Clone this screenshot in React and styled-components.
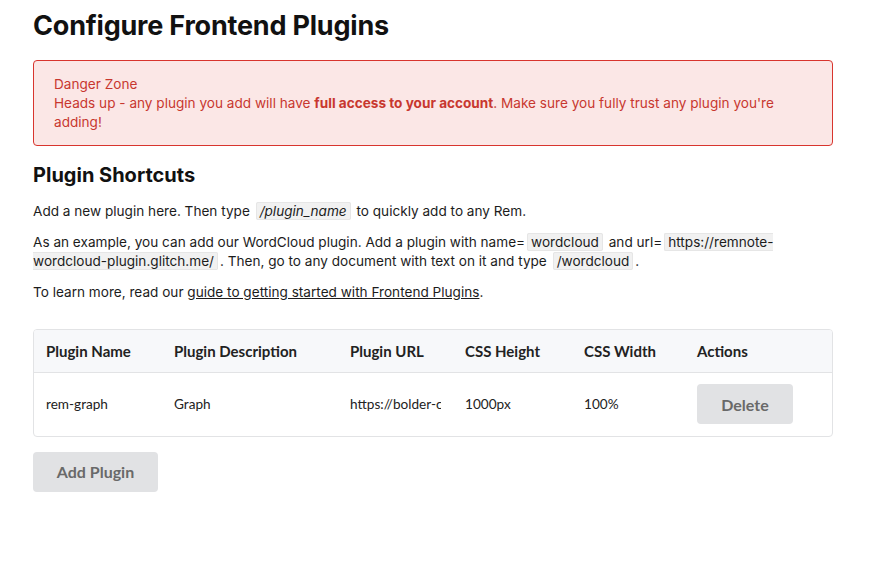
import React from 'react'
import styled, { createGlobalStyle } from 'styled-components'

const Global = createGlobalStyle`
  body {
    margin: 0;
    background: #fff;
    font-family: Inter, "Noto Sans", sans-serif;
    color: #1a1a1a;
  }
`

const Page = styled.div`
  width: 800px;
  padding: 10px 33px 40px 33px;
`

const Title = styled.h1`
  font-size: 27px;
  font-weight: 700;
  color: #111;
  margin: 0 0 18px 0;
  line-height: 32px;
  letter-spacing: -0.2px;
`

const Danger = styled.div`
  border: 1px solid #d8352e;
  background: #fbe7e6;
  border-radius: 4px;
  padding: 14px 20px 13px 20px;
  color: #c8372f;
  font-size: 13.6px;
  line-height: 19px;

  b {
    font-weight: 700;
  }
`

const SubTitle = styled.h2`
  font-size: 20px;
  font-weight: 700;
  color: #111;
  margin: 17px 0 15px 0;
  line-height: 24px;
`

const Para = styled.p`
  font-size: 13.6px;
  line-height: 19px;
  margin: 0 0 12px 0;
  color: #1c1c1c;

  a {
    color: inherit;
    text-decoration: underline;
  }
`

const Code = styled.code`
  font-family: inherit;
  font-style: ${p => (p.$italic ? 'italic' : 'normal')};
  background: #f1f1f1;
  border: 1px solid #e6e6e6;
  border-radius: 2px;
  padding: 0 3px;
  margin: 0 2px;
`

const TableWrap = styled.div`
  margin-top: 27px;
  border: 1px solid #e2e3e5;
  border-radius: 4px;
  overflow: hidden;
  font-family: Lato, "Noto Sans", sans-serif;
`

const Table = styled.table`
  width: 100%;
  border-collapse: collapse;
  table-layout: fixed;
`

const Th = styled.th`
  box-sizing: border-box;
  text-align: left;
  font-weight: 700;
  font-size: 15px;
  color: #222;
  background: #f7f8fa;
  height: 42px;
  padding: 0 12px;
  border-bottom: 1px solid #e2e3e5;
  width: ${p => p.$w}px;
`

const Td = styled.td`
  height: 63px;
  padding: 0 12px;
  font-size: 13.6px;
  color: #222;
`

const Clip = styled.div`
  white-space: nowrap;
  overflow: hidden;
`

const Button = styled.button`
  font-family: Lato, "Noto Sans", sans-serif;
  font-weight: 700;
  font-size: 16px;
  color: #696969;
  background: #e1e2e4;
  border: none;
  border-radius: 4px;
  height: 40px;
  width: ${p => p.$w}px;
  cursor: pointer;
`

const Footer = styled.div`
  margin-top: 15px;
`

const cols = [
  ['Plugin Name', 128],
  ['Plugin Description', 176],
  ['Plugin URL', 115],
  ['CSS Height', 119],
  ['CSS Width', 113],
  ['Actions', 149],
]

export default function App() {
  return (
    <Page>
      <Global />
      <Title>Configure Frontend Plugins</Title>
      <Danger>
        Danger Zone
        <br />
        Heads up - any plugin you add will have <b>full access to your account</b>. Make sure you fully trust any plugin you're adding!
      </Danger>
      <SubTitle>Plugin Shortcuts</SubTitle>
      <Para>
        Add a new plugin here. Then type <Code $italic>/plugin_name</Code> to quickly add to any Rem.
      </Para>
      <Para>
        As an example, you can add our WordCloud plugin. Add a plugin with name=<Code>wordcloud</Code> and url=
        <Code>https://remnote-wordcloud-plugin.glitch.me/</Code>. Then, go to any document with text on it and type <Code>/wordcloud</Code>.
      </Para>
      <Para>
        To learn more, read our <a href="#guide">guide to getting started with Frontend Plugins</a>.
      </Para>
      <TableWrap>
        <Table>
          <thead>
            <tr>
              {cols.map(([name, w]) => (
                <Th key={name} $w={w}>{name}</Th>
              ))}
            </tr>
          </thead>
          <tbody>
            <tr>
              <Td>rem-graph</Td>
              <Td>Graph</Td>
              <Td><Clip>https://bolder-cobalt-graph.glitch.me/</Clip></Td>
              <Td>1000px</Td>
              <Td>100%</Td>
              <Td><Button $w={96}>Delete</Button></Td>
            </tr>
          </tbody>
        </Table>
      </TableWrap>
      <Footer>
        <Button $w={125}>Add Plugin</Button>
      </Footer>
    </Page>
  )
}
